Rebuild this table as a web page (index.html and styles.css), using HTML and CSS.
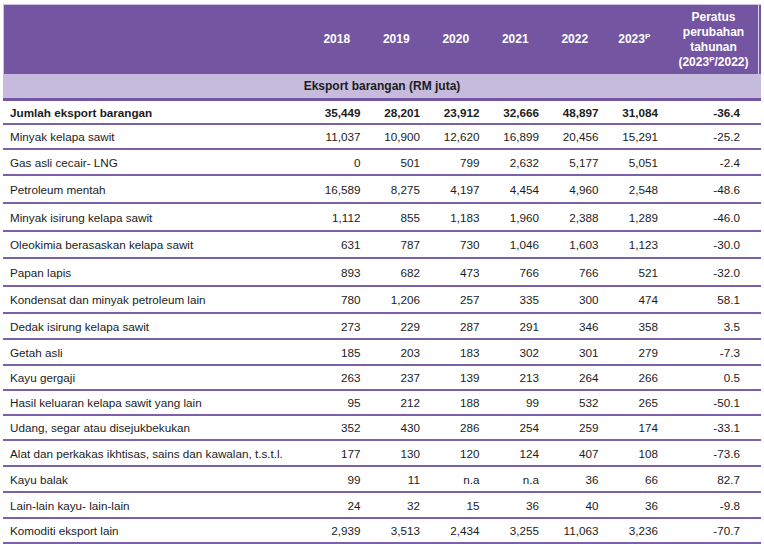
FILE: index.html
```html
<!DOCTYPE html>
<html lang="ms">
<head>
<meta charset="utf-8">
<title>Eksport barangan</title>
<link rel="stylesheet" href="styles.css">
</head>
<body>
<div class="wrap">
<table class="exp">
  <colgroup>
    <col class="c-label"><col class="c-num"><col class="c-num"><col class="c-num"><col class="c-num"><col class="c-num"><col class="c-num"><col class="c-chg">
  </colgroup>
  <thead>
    <tr class="head">
      <th class="h-label"></th>
      <th class="h-year">2018</th>
      <th class="h-year">2019</th>
      <th class="h-year">2020</th>
      <th class="h-year">2021</th>
      <th class="h-year">2022</th>
      <th class="h-year">2023<sup>P</sup></th>
      <th class="h-chg">Peratus<br>perubahan<br>tahunan<br>(2023<sup>P</sup>/2022)</th>
    </tr>
    <tr class="sub">
      <th colspan="8">Eksport barangan (RM juta)</th>
    </tr>
  </thead>
  <tbody>
    <tr class="total h24"><td>Jumlah eksport barangan</td><td>35,449</td><td>28,201</td><td>23,912</td><td>32,666</td><td>48,897</td><td>31,084</td><td>-36.4</td></tr>
    <tr class="h25"><td>Minyak kelapa sawit</td><td>11,037</td><td>10,900</td><td>12,620</td><td>16,899</td><td>20,456</td><td>15,291</td><td>-25.2</td></tr>
    <tr class="h26"><td>Gas asli cecair- LNG</td><td>0</td><td>501</td><td>799</td><td>2,632</td><td>5,177</td><td>5,051</td><td>-2.4</td></tr>
    <tr class="h28"><td>Petroleum mentah</td><td>16,589</td><td>8,275</td><td>4,197</td><td>4,454</td><td>4,960</td><td>2,548</td><td>-48.6</td></tr>
    <tr class="h28"><td>Minyak isirung kelapa sawit</td><td>1,112</td><td>855</td><td>1,183</td><td>1,960</td><td>2,388</td><td>1,289</td><td>-46.0</td></tr>
    <tr class="h27"><td>Oleokimia berasaskan kelapa sawit</td><td>631</td><td>787</td><td>730</td><td>1,046</td><td>1,603</td><td>1,123</td><td>-30.0</td></tr>
    <tr class="h28"><td>Papan lapis</td><td>893</td><td>682</td><td>473</td><td>766</td><td>766</td><td>521</td><td>-32.0</td></tr>
    <tr class="h27"><td>Kondensat dan minyak petroleum lain</td><td>780</td><td>1,206</td><td>257</td><td>335</td><td>300</td><td>474</td><td>58.1</td></tr>
    <tr class="h26"><td>Dedak isirung kelapa sawit</td><td>273</td><td>229</td><td>287</td><td>291</td><td>346</td><td>358</td><td>3.5</td></tr>
    <tr class="h26"><td>Getah asli</td><td>185</td><td>203</td><td>183</td><td>302</td><td>301</td><td>279</td><td>-7.3</td></tr>
    <tr class="h25"><td>Kayu gergaji</td><td>263</td><td>237</td><td>139</td><td>213</td><td>264</td><td>266</td><td>0.5</td></tr>
    <tr class="h25"><td>Hasil keluaran kelapa sawit yang lain</td><td>95</td><td>212</td><td>188</td><td>99</td><td>532</td><td>265</td><td>-50.1</td></tr>
    <tr class="h25"><td>Udang, segar atau disejukbekukan</td><td>352</td><td>430</td><td>286</td><td>254</td><td>259</td><td>174</td><td>-33.1</td></tr>
    <tr class="h26"><td>Alat dan perkakas ikhtisas, sains dan kawalan, t.s.t.l.</td><td>177</td><td>130</td><td>120</td><td>124</td><td>407</td><td>108</td><td>-73.6</td></tr>
    <tr class="h26"><td>Kayu balak</td><td>99</td><td>11</td><td>n.a</td><td>n.a</td><td>36</td><td>66</td><td>82.7</td></tr>
    <tr class="h26"><td>Lain-lain kayu- lain-lain</td><td>24</td><td>32</td><td>15</td><td>36</td><td>40</td><td>36</td><td>-9.8</td></tr>
    <tr class="h25"><td>Komoditi eksport lain</td><td>2,939</td><td>3,513</td><td>2,434</td><td>3,255</td><td>11,063</td><td>3,236</td><td>-70.7</td></tr>
  </tbody>
</table>
</div>
</body>
</html>
```

FILE: styles.css
```css
html, body {
  margin: 0;
  padding: 0;
  background: #ffffff;
}

.wrap {
  padding: 4px 3px 0 3px;
}

.exp {
  width: 758px;
  table-layout: fixed;
  border-collapse: separate;
  border-spacing: 0;
  font-family: "Liberation Sans", Arial, sans-serif;
  font-size: 12px;
  color: #1c1c1c;
}

.c-label { width: 306px; }
.c-num { width: 59.5px; }
.c-chg { width: 95px; }

.exp th,
.exp td {
  padding: 0;
  box-sizing: border-box;
}

.head th {
  background: #7355a1;
  color: #ffffff;
  font-weight: bold;
  height: 70px;
  border-top: 1px solid #cdc2e1;
  vertical-align: middle;
  line-height: 15px;
}

.head .h-label {
  border-left: 1px solid #cdc2e1;
}

.head .h-year {
  text-align: center;
  padding-right: 4px;
}

.head .h-chg {
  text-align: center;
  box-shadow: inset -2px 0 0 #7355a1, inset -3px 0 0 #d9d0ea;
}

.head sup {
  font-size: 8px;
  line-height: 0;
  vertical-align: 4px;
}

.sub th {
  background: #c6badd;
  color: #1c1c1c;
  font-weight: bold;
  text-align: center;
  height: 27px;
  padding-bottom: 1px;
  border-bottom: 3px solid #7355a1;
}

.exp tbody td {
  border-bottom: 2px solid #7c60aa;
  text-align: right;
  padding-right: 8px;
  vertical-align: middle;
  white-space: nowrap;
  font-size: 11.7px;
}

.exp tbody td:first-child {
  text-align: left;
  padding-left: 7px;
  padding-right: 0;
}

.exp tbody td:last-child {
  padding-right: 21px;
}

.total td {
  font-weight: bold;
}

.h24 td { height: 24px; }
.h25 td { height: 25px; }
.h26 td { height: 26px; }
.h27 td { height: 27px; }
.h28 td { height: 28px; }
```
